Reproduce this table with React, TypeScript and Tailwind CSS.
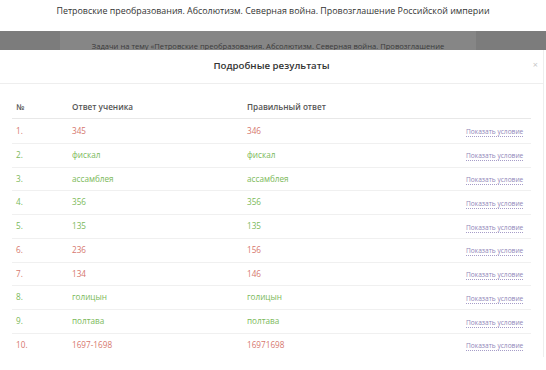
import React from "react";

type Row = {
  n: number;
  answer: string;
  correct: string;
  ok: boolean;
};

const rows: Row[] = [
  { n: 1, answer: "345", correct: "346", ok: false },
  { n: 2, answer: "фискал", correct: "фискал", ok: true },
  { n: 3, answer: "ассамблея", correct: "ассамблея", ok: true },
  { n: 4, answer: "356", correct: "356", ok: true },
  { n: 5, answer: "135", correct: "135", ok: true },
  { n: 6, answer: "236", correct: "156", ok: false },
  { n: 7, answer: "134", correct: "146", ok: false },
  { n: 8, answer: "голицын", correct: "голицын", ok: true },
  { n: 9, answer: "полтава", correct: "полтава", ok: true },
  { n: 10, answer: "1697-1698", correct: "16971698", ok: false },
];

export default function App() {
  return (
    <div
      className="relative h-[370px] w-[546px] overflow-hidden bg-white"
      style={{ fontFamily: '"Open Sans", "Noto Sans", sans-serif' }}
    >
      {/* page behind the modal */}
      <div className="flex h-[31px] items-start justify-center pt-[4px] text-[8.9px] text-[#333]">
        Петровские преобразования. Абсолютизм. Северная война. Провозглашение Российской империи
      </div>
      <div className="flex h-[19px] bg-[#7c7c7c]">
        <div className="ml-[60px] flex w-[416px] items-end justify-center overflow-hidden bg-[#868686]">
          <span className="translate-y-[2px] whitespace-nowrap text-[7.6px] leading-[12px] text-[#3a3a3a]">
            Задачи на тему «Петровские преобразования. Абсолютизм. Северная война. Провозглашение
          </span>
        </div>
      </div>

      {/* modal */}
      <div className="w-[544px] border-r border-[#eeeeee] bg-white">
        <div className="relative flex h-[34px] items-center justify-center border-b border-[#eeeeee]">
          <span className="text-[9.7px] font-semibold text-[#333]">Подробные результаты</span>
          <span className="absolute right-[5px] top-[10px] text-[9px] leading-none text-[#c8c8c8]">×</span>
        </div>

        <div className="px-[12px] pt-[12px]">
          <div className="flex h-[23px] items-center border-b border-[#e8e8e8] text-[8.2px] font-semibold text-[#555]">
            <div className="w-[60px] pl-[4px]">№</div>
            <div className="w-[175px]">Ответ ученика</div>
            <div className="w-[219px]">Правильный ответ</div>
          </div>
          {rows.map((row, i) => (
            <div
              key={row.n}
              className={
                "flex h-[23.75px] items-center text-[8.2px] " +
                (i > 0 ? "border-t border-[#f0f0f0] " : "") +
                (row.ok ? "text-[#7bb95a]" : "text-[#d6766d]")
              }
            >
              <div className="w-[60px] pl-[4px]">{row.n}.</div>
              <div className="w-[175px]">{row.answer}</div>
              <div className="w-[219px]">{row.correct}</div>
              <div className="pt-[1px]">
                <span className="border-b border-dotted border-[#a69dc8] text-[6.6px] text-[#8f86b8]">
                  Показать условие
                </span>
              </div>
            </div>
          ))}
        </div>
      </div>
    </div>
  );
}
